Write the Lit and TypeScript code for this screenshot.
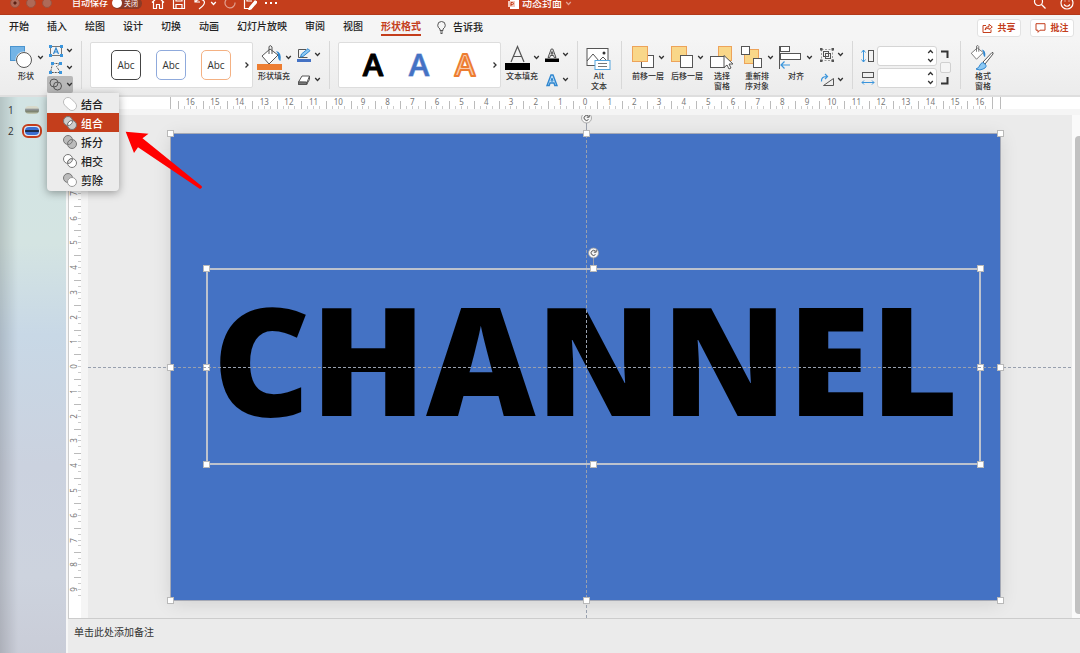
import { LitElement, html, css, svg, TemplateResult } from "lit";
import { customElement, state } from "lit/decorators.js";
import { classMap } from "lit/directives/class-map.js";

const chevron = html`<svg class="chev" width="7" height="5" viewBox="0 0 7 5" aria-hidden="true"><path d="M1.2 1l2.3 2.5L5.8 1" fill="none" stroke="currentColor" stroke-width="1.3"/></svg>`;

const icon = (w: number, h: number, body: TemplateResult | unknown) =>
  html`<svg width=${w} height=${h} viewBox="0 0 ${w} ${h}" fill="none" stroke="#555" stroke-width="1" aria-hidden="true">${body}</svg>`;

const bucket = svg`<path d="M3 11L11 4l8 6-9 9z" fill="#fff"/><path d="M10 9V1.500q2-2 3 .5V9"/><path d="M17 6q6 1 4.500 10q-3-1-2.500-7z" fill="#2f86cf" stroke="none"/>`;

const icons = {
  shapes: icon(25, 26, svg`<rect x="1.500" y="1.500" width="14" height="14" fill="#74b4e6" stroke="#4a94cf"/><circle cx="15" cy="15" r="8.500" fill="#f5f5f5" stroke="none"/><circle cx="15" cy="15" r="7.500" fill="#fff"/>`),
  textbox: icon(14, 12, svg`<rect x="1.500" y="1.500" width="11" height="9" stroke="#777"/><path d="M4.500 9L7 3l2.500 6M5.500 7h3" stroke="#2f86cf" stroke-width="1.200"/><path d="M0 0h3v3H0zM11 0h3v3h-3zM0 9h3v3H0zM11 9h3v3h-3z" fill="#3a95dc" stroke="none"/>`),
  points: icon(14, 12, svg`<path d="M3.500 1.500L1.500 10.500M3.500 1.500h8l-4 3 4 6h-10" stroke-dasharray="2 1"/><path d="M2 0h3v3H2zM10 0h3v3h-3zM0 9h3v3H0zM10 9h3v3h-3z" fill="#3a95dc" stroke="none"/>`),
  merge: icon(14, 13, svg`<circle cx="5" cy="5" r="4"/><circle cx="8.500" cy="8" r="4"/>`),
  fill: icon(25, 26, svg`<g transform="translate(2 0)">${bucket}</g><path d="M0 19h25v6H0z" fill="#ed7d31" stroke="none"/>`),
  line: icon(14, 14, svg`<path d="M9 1.500H1.500v8h9" /><path d="M3.500 9l1-3L11 .7l2 2L6 8.500z" fill="#8cc8f3" stroke="#2f86cf"/><path d="M0 11h14v3H0z" fill="#4472c4" stroke="none"/>`),
  eraser: icon(14, 12, svg`<path d="M1.500 8L5 2h7.500L10 8.500z" fill="#fff"/><path d="M1.500 8v2.500H9.500l3-5V2M10 8.500v2" fill="none"/><path d="M1.500 8h8v2.500h-8z" fill="#777"/>`),
  textfill: icon(25, 26, svg`<path d="M6 17L12.500 1.500 19 17M8.300 11.500h8.400" stroke-width="1.200"/><path d="M0 18h25v7H0z" fill="#000" stroke="none"/>`),
  textline: icon(14, 14, svg`<path d="M3 9.500L6.200 1h1.600L11 9.500H9.200L8.500 7.500h-3L4.800 9.500z" fill="#ddd"/><path d="M6 6h2L7 3.500z"/><path d="M0 10.500h14V14H0z" fill="#000" stroke="none"/>`),
  texteffect: icon(14, 14, svg`<path d="M2 12.500L6 2h2l4 10.500H9.800L9 10H5l-.8 2.500z" fill="#bcdcf5" stroke="#2f86cf" stroke-width="1.400"/><path d="M6 8h2L7 5z" fill="#fff" stroke="#2f86cf"/>`),
  alt: icon(25, 26, svg`<rect x="1" y="3.500" width="21" height="17" fill="#fff"/><path d="M1 16l6-7 6 7 4-4 5 5"/><circle cx="18" cy="8" r="1.500" fill="#333" stroke="none"/><rect x="9" y="15.500" width="15" height="9" fill="#fff" stroke="#56a5dd"/><path d="M12 18.500h9M12 21.500h9" stroke="#777"/>`),
  forward: icon(24, 26, svg`<rect x="10.500" y="10.500" width="12" height="12" fill="#fff"/><rect x="1.500" y="1.500" width="15" height="15" fill="#f9d789" stroke="#eda35a"/>`),
  backward: icon(24, 26, svg`<rect x="1.500" y="1.500" width="15" height="15" fill="#f9d789" stroke="#eda35a"/><rect x="10.500" y="10.500" width="12" height="12" fill="#fff"/>`),
  pane: icon(25, 26, svg`<rect x="9.500" y="1.500" width="13" height="14" fill="#f9d789" stroke="#eda35a"/><rect x="1.500" y="11.500" width="14" height="11" fill="#fff"/><path d="M15 10.500v12l3-2.500 2 4 2-1-2-4h4z" fill="#fff"/>`),
  reorder: icon(24, 26, svg`<rect x="4.500" y="4.500" width="14" height="14" fill="#f9d789" stroke="#eda35a"/><rect x="1.500" y="1.500" width="8" height="8" fill="#fff"/><rect x="13.500" y="13.500" width="8" height="9" fill="#fff"/>`),
  align: icon(24, 26, svg`<path d="M.5 1v23"/><rect x="1.500" y="1.500" width="9" height="5" fill="#fff"/><rect x="1.500" y="8.500" width="20" height="6" fill="#fff"/><path d="M11 20H2m3.500-3.500L2 20l3.500 3.500" stroke="#3a95dc" stroke-width="1.200"/>`),
  group: icon(14, 14, svg`<rect x="1.500" y="1.500" width="11" height="11" stroke="#999" stroke-dasharray="2 1.500"/><rect x="3.500" y="3.500" width="5" height="5"/><rect x="5.500" y="5.500" width="5" height="5"/><path d="M0 0h2.500v2.500H0zM11.500 0H14v2.500h-2.500zM0 11.500h2.500V14H0zM11.500 11.500H14V14h-2.500z" fill="#555" stroke="none"/>`),
  rotate: icon(14, 14, svg`<path d="M3.500 12.500h10v-7z"/><path d="M1.500 8.500Q1 3.500 7 3.500M5 1l2.500 2.500L5 6" stroke="#3a95dc" stroke-width="1.200"/>`),
  height: icon(14, 14, svg`<path d="M2.500 1v12M.5 3.500l2-2.500 2 2.500M.5 10.500l2 2.500 2-2.500" stroke="#3a95dc"/><rect x="7.500" y="1.500" width="5" height="11"/>`),
  width: icon(14, 14, svg`<path d="M1 11.500h12M3 9.500l-2 2 2 2M11 9.500l2 2-2 2" stroke="#3a95dc"/><rect x="1.500" y="1.500" width="11" height="5"/>`),
  format: icon(25, 26, svg`<g transform="translate(-1 0) scale(.75)">${bucket}</g><path d="M13 17L22 7.500q1.500-.5 1 1.500l-8 10z" fill="#fff"/><path d="M6 24q3-1 4-4 2-4 5-1t-2 5q-3 2-7 0z" fill="#8cc8f3" stroke="#2f86cf"/>`),
};

const pair = (a: string, b: string, mid = "none") => svg`
  <circle cx="5" cy="5" r="4.500" fill=${a} stroke="#777"/>
  <circle cx="9" cy="9" r="4.500" fill=${b} stroke="#777"/>
  <path d="M4.600 9.500A4.500 4.500 0 0 1 9.500 4.600A4.500 4.500 0 0 1 4.600 9.500z" fill=${mid} stroke="#777"/>`;

const mergeItems = [
  { label: "结合", art: svg`<path d="M1.800 8.200a4.500 4.500 0 0 1 6.400-6.400l4 4a4.500 4.500 0 0 1-6.400 6.400z" fill="#fff" stroke="#bbb"/>` },
  { label: "组合", art: pair("#ccc", "#ccc", "#fff") },
  { label: "拆分", art: pair("#bbb", "#bbb", "#bbb") },
  { label: "相交", art: pair("#fff", "#fff", "#ddd") },
  { label: "剪除", art: svg`<circle cx="5" cy="5" r="4.500" fill="#bbb" stroke="#777"/><circle cx="9" cy="9" r="4.500" fill="#fff" stroke="#999"/>` },
];

const tabs = ["开始", "插入", "绘图", "设计", "切换", "动画", "幻灯片放映", "审阅", "视图", "形状格式"];

const centimetres = (n: number) => Array.from({ length: 2 * n + 1 }, (_, i) => Math.abs(i - n));

@customElement("slide-ruler")
class SlideRuler extends LitElement {
  static properties = { reach: { type: Number }, vertical: { type: Boolean, reflect: true } };
  declare reach: number;
  declare vertical: boolean;

  static styles = css`
    :host { display: block; box-sizing: border-box; background: #fff; color: #777; font: 8px/9px "Noto Sans", sans-serif; }
    .track { display: flex; justify-content: center; height: 100%; box-sizing: border-box; }
    :host(:not([vertical])) .track { padding: 0 7px; border: solid #bbb; border-width: 0 1px; }
    .cell {
      flex: 1; display: flex; justify-content: center; min-width: 0;
      background:
        linear-gradient(#bbb, #bbb) 0 100% / 1px 8px no-repeat,
        linear-gradient(#ccc, #ccc) 25% 100% / 1px 3px no-repeat,
        linear-gradient(#ccc, #ccc) 50% 100% / 1px 3px no-repeat,
        linear-gradient(#ccc, #ccc) 75% 100% / 1px 3px no-repeat;
    }
    .cell:last-child { border-right: 1px solid #bbb; }
    :host([vertical]) .track { flex-direction: column; }
    :host([vertical]) .cell {
      flex: 0 0 5.3%; align-items: center; justify-content: flex-start;
      background:
        linear-gradient(#bbb, #bbb) 100% 0 / 7px 1px no-repeat,
        linear-gradient(#ccc, #ccc) 100% 25% / 3px 1px no-repeat,
        linear-gradient(#ccc, #ccc) 100% 50% / 3px 1px no-repeat,
        linear-gradient(#ccc, #ccc) 100% 75% / 3px 1px no-repeat;
    }
    :host([vertical]) .cell:last-child { border-right: 0; }
    :host([vertical]) .mark { width: 9px; text-align: center; transform: rotate(-90deg); }
  `;

  render() {
    return html`<div class="track">${centimetres(this.reach).map(n => html`<div class="cell"><span class="mark">${n}</span></div>`)}</div>`;
  }
}

@customElement("app-root")
class AppRoot extends LitElement {
  @state() private chosen = "组合";

  static styles = css`
    :host { display: flex; flex-direction: column; min-height: 100vh; position: relative; overflow: hidden; background: #ebebeb; color: #333; font: 10px/16px "Noto Sans CJK SC", sans-serif; }
    * { box-sizing: border-box; }
    svg { display: block; flex: none; }
    button { font: inherit; color: inherit; background: none; border: 0; padding: 0; margin: 0; }
    a { color: inherit; text-decoration: none; }

    .titlebar { display: grid; grid-template-columns: 1fr auto 1fr; grid-template-rows: 14px; align-items: end; height: 15px; overflow: hidden; background: #c43e1c; border-bottom: 1px solid #b3391a; color: #fff; }
    .bar { display: flex; align-items: center; height: 22px; }
    .lights { display: flex; gap: 6px; padding: 0 20px 0 10px; }
    .light { width: 10px; height: 10px; border-radius: 50%; background: #ae6a58; border: 1px solid #9c5340; }
    .light.dot { background: radial-gradient(#5c2012 20%, #ae6a58 35%); }
    .autosave { font-size: 9px; font-weight: 500; padding-right: 4px; }
    .toggle { display: flex; align-items: center; gap: 2px; width: 30px; height: 11px; border-radius: 6px; background: #8c3a26; font-size: 7px; line-height: 11px; margin-right: 9px; }
    .knob { width: 10px; height: 10px; border-radius: 50%; background: #fff; }
    .quick { display: flex; align-items: center; gap: 7px; }
    .quick .chev { margin-left: -4px; }
    .document { gap: 3px; font-weight: 500; }
    .faded { opacity: .5; }
    .right { justify-content: flex-end; gap: 14px; padding-right: 6px; }

    .tabs { display: flex; align-items: center; height: 24px; padding: 0 6px 0 9px; background: #f5f5f5; }
    .tablist { display: flex; gap: 18px; flex: none; }
    .tab { font-weight: 500; line-height: 16px; color: #222; white-space: nowrap; border-bottom: 2px solid transparent; }
    .tab.on { color: #c43e1c; font-weight: 700; border-color: #c43e1c; }
    .tell { display: flex; align-items: center; gap: 7px; margin-left: 16px; font-weight: 500; color: #222; flex: 1; }
    .actions { display: flex; gap: 9px; padding-top: 1px; }
    .action { display: flex; align-items: center; justify-content: center; gap: 4px; width: 44px; height: 18px; background: #fff; border: 1px solid #e2e2e2; border-radius: 3px; color: #c43e1c; font-size: 9px; font-weight: 700; white-space: nowrap; }

    .ribbon { display: flex; align-items: flex-start; height: 58px; padding: 2px 0 0 9px; background: linear-gradient(#f5f5f5, #ececec); border-bottom: 2px solid #dedede; color: #333; }
    .group { display: flex; gap: 4px; flex: none; }
    .group.airy { gap: 5px; }
    .rule { width: 1px; height: 48px; margin: 0 8px; background: #d8d8d8; flex: none; }
    .rule.roomy { margin: 0 9px; }
    .big { display: flex; flex-direction: column; width: 34px; padding-top: 3px; font-size: 8px; line-height: 10px; font-weight: 500; text-align: center; }
    .big.slim { width: 26px; }
    .face { display: flex; align-items: center; gap: 3px; height: 27px; }
    .caption { white-space: pre-line; }
    .wide .caption { white-space: nowrap; }
    .stack { display: flex; flex-direction: column; width: 26px; padding-top: 1px; position: relative; }
    .small { display: flex; align-items: center; gap: 3px; height: 25px; padding-left: 2px; }
    .dense .small { height: 17px; }
    .small.held { background: #b8b8b8; border-radius: 2px; }
    .gallery { display: flex; align-items: center; width: 163px; height: 46px; margin-top: 1px; padding: 0 2px 0 20px; background: #fff; border: 1px solid #ddd; border-radius: 2px; }
    .samples { display: flex; justify-content: space-between; flex: 1; padding-right: 13px; }
    .sample { width: 30px; height: 30px; border: 1px solid #444; border-radius: 5px; font: 10px/24px "Open Sans", sans-serif; }
    .sample.blue { border-color: #8faadc; }
    .sample.orange { border-color: #f4b183; }
    .letter svg { overflow: visible; }

    .size { display: grid; grid-template-columns: 14px 60px 12px; column-gap: 2px; row-gap: 2px; align-items: center; padding-top: 5px; }
    .field { display: flex; align-items: center; height: 20px; background: #fff; border: 1px solid #d5d5d5; border-radius: 3px; }
    .field input { width: 100%; min-width: 0; border: 0; background: none; font: inherit; padding: 0 3px; outline: none; }
    .spin { display: flex; flex-direction: column; gap: 4px; padding-right: 2px; color: #333; }
    .up { transform: rotate(180deg); }
    .lock { grid-column: 3; grid-row: 1 / span 2; display: flex; flex-direction: column; align-items: center; gap: 4px; }
    .lock input { appearance: none; width: 11px; height: 11px; margin: 0; border: 1px solid #d0d0d0; border-radius: 2px; background: #f5f5f5; }

    .menu { position: absolute; z-index: 3; top: 52px; left: 0; width: 72px; margin: 0; padding: 1px 0 2px; list-style: none; background: #ececec; border-radius: 0 0 4px 4px; box-shadow: 0 2px 8px rgba(0, 0, 0, .35); }
    .option { display: flex; align-items: center; gap: 4px; width: 100%; height: 19px; padding-left: 16px; font-size: 11px; font-weight: 500; color: #222; }
    .option.on { background: #c43e1c; color: #fff; }

    .body { display: grid; grid-template-columns: 66px 1fr; flex: 1; }
    .slides { display: flex; flex-direction: column; gap: 5px; padding: 5px 0 0 8px; background: linear-gradient(90deg, rgba(0, 0, 0, .14), transparent 18px), linear-gradient(#d2e4e4, #d4e4e2 26%, #c8d8e6 42%, #cbd2df 65%, #cdd3de 85%, #c9ccd7); }
    .slide-row { display: grid; grid-template-columns: 8px 20px; gap: 6px; align-items: center; color: #333; font-family: "Open Sans", sans-serif; }
    .thumb { width: 20px; height: 14px; padding: 1px; border-radius: 6px; border: 2px solid transparent; }
    .thumb.on { border-color: #c43e1c; background: #dbe7f5; }
    .mini { height: 100%; border-radius: 4px; background: linear-gradient(#d8dacb 25%, #8b9092 45%, #7d8470 70%, #cdd3bd); }
    .thumb.on .mini { background: linear-gradient(#3c6fd0 35%, #1b2c4c 36%, #1b2c4c 60%, #3c6fd0 61%); }

    .editor { display: flex; flex-direction: column; border-left: 2px solid #f7f7f7; min-width: 0; }
    .stage { display: grid; grid-template-columns: 19px 1fr 8px; grid-template-rows: 18px auto; border-left: 1px solid #ccc; }
    .across { grid-column: 1 / -1; height: 18px; padding: 0 79px 0 101px; border-bottom: 6px solid #f5f5f5; }
    .down { padding: 18px 0; border-right: 7px solid #f5f5f5; }
    .canvas { position: relative; padding: 19px 72px 18px 83px; overflow: hidden; }
    .scroll { background: #fafafa; padding: 21px 0 4px 3px; }
    .thumbbar { height: 100%; background: #c1c1c1; border-radius: 4px 0 0 4px; }

    .slide { position: relative; aspect-ratio: 16 / 9; background: #4472c4; box-shadow: 0 0 0 1px #a5a9b5, 0 3px 18px rgba(0, 0, 0, .12); }
    .guide { position: absolute; pointer-events: none; }
    .guide.h { left: -83px; right: -72px; top: 50%; height: 1px; background: repeating-linear-gradient(90deg, #98a0ae 0 3px, transparent 3px 5px); }
    .guide.v { top: -19px; bottom: -18px; left: 50%; width: 1px; background: repeating-linear-gradient(#98a0ae 0 3px, transparent 3px 5px); }
    .textbox { position: absolute; left: 4.300%; top: 29%; width: 93.300%; height: 41.800%; outline: 2px solid #bcc2ce; outline-offset: -1px; display: flex; align-items: center; justify-content: center; }
    .word { margin: 0; padding: 0 16px 18px 0; font: 900 151px/151px "Noto Sans", sans-serif; color: #000; white-space: nowrap; }
    .handle { position: absolute; width: 7px; height: 7px; margin: -4px; background: #fff; border: 1px solid #b9b9b9; }
    .n { top: 0; } .s { bottom: 0; } .w { left: 0; } .e { right: 0; }
    .cx { left: 50%; margin-left: -3px; } .cy { top: 50%; margin-top: -3px; }
    .spinner { position: absolute; left: 50%; top: -22px; margin-left: -5px; }

    .notes { flex: 1; border: 0; border-top: 1px solid #ccc; border-bottom: 1px solid #aaa; padding: 5px 6px; background: #ebebeb; font: inherit; color: #333; resize: none; min-height: 34px; overflow: hidden; outline: none; }
    .notes::placeholder { color: #333; opacity: 1; }
    .pointer { position: absolute; z-index: 4; left: 125px; top: 131px; pointer-events: none; }
  `;

  private big(name: keyof typeof icons, label: string, drop = true, slim = false) {
    return html`<button class=${classMap({ big: true, slim, wide: !label.includes("\n") })}>
      <span class="face">${icons[name]}${drop ? chevron : ""}</span><span class="caption">${label}</span>
    </button>`;
  }

  private small(name: keyof typeof icons, label: string, held = false) {
    return html`<button class=${classMap({ small: true, held })} aria-label=${label}>${icons[name]}${chevron}</button>`;
  }

  private more() {
    return html`<button aria-label="更多"><svg width="6" height="8" viewBox="0 0 6 8"><path d="M1.500 1.500L4 4 1.500 6.500" fill="none" stroke="#333" stroke-width="1.300"/></svg></button>`;
  }

  private handles() {
    return ["n w", "n cx", "n e", "cy w", "cy e", "s w", "s cx", "s e"].map(at => html`<i class="handle ${at}"></i>`);
  }

  private spinner() {
    return html`<svg class="spinner" width="11" height="18" viewBox="0 0 11 18" fill="none"><path d="M5.500 11v7" stroke="#9a9fab"/><circle cx="5.500" cy="6" r="5" fill="#f5f5f5" stroke="#999" stroke-width=".8"/><path d="M7.500 7.500A2.500 2.500 0 1 1 7.500 4.300M8.200 2.800v2.400H5.800" stroke="#555"/></svg>`;
  }

  private titlebar() {
    const line = (w: number, body: unknown) => html`<svg width=${w} height="14" viewBox="0 0 ${w} 14" fill="none" stroke="#fff" stroke-width="1.200">${body}</svg>`;
    return html`<header class="titlebar">
      <div class="bar">
        <div class="lights"><i class="light dot"></i><i class="light"></i><i class="light"></i></div>
        <span class="autosave">自动保存</span>
        <span class="toggle"><i class="knob"></i>关闭</span>
        <div class="quick">
          ${line(14, svg`<path d="M1 6.500L7 1l6 5.500M2.500 5.500v7H5.500v-4h3v4h3v-7"/>`)}
          ${line(14, svg`<path d="M1.500 1.500h9l2 2v9h-11zM4 1.500v3.500h6V1.500M4 12.500V8.500h6v4"/>`)}
          ${line(14, svg`<path d="M2 1v5h5M2 6q5-5 9-1 2 3-5 8"/>`)}
          ${chevron}
          <span class="faded">${line(12, svg`<path d="M8.500 2.500a5 5 0 1 0 2.500 4M8 0v3h3"/>`)}</span>
          ${line(14, svg`<path d="M12 4V1.500H1.500v11H6M4 1.500V5h5M13 5l-6 7-1 1.500"/><path d="M12 5l2 1-6 7-2 .5.500-2z" fill="#fff"/>`)}
          ${line(14, svg`<path d="M1 7h2m3 0h2m3 0h2" stroke-width="2"/>`)}
        </div>
      </div>
      <div class="bar document">
        <svg width="11" height="12" viewBox="0 0 11 12"><path d="M2 0h6l3 3v9H2z" fill="#fff"/><path d="M0 4h7v6H0z" fill="#f4c8bb"/><path d="M3 9V5.500h1.500a1 1 0 0 1 0 2H3" fill="none" stroke="#c43e1c"/></svg>
        动态封面 <span class="faded">${chevron}</span>
      </div>
      <div class="bar right">
        ${line(13, svg`<circle cx="5.500" cy="5.500" r="4"/><path d="M8.500 8.500l4 4"/>`)}
        ${line(14, svg`<circle cx="7" cy="7" r="6"/><path d="M4 8.500q3 3.500 6 0"/><path d="M4.500 5h1m3 0h1"/>`)}
      </div>
    </header>`;
  }

  private tabRow() {
    return html`<nav class="tabs">
      <div class="tablist">${tabs.map(t => html`<a href="#" class=${classMap({ tab: true, on: t === "形状格式" })}>${t}</a>`)}</div>
      <button class="tell"><svg width="9" height="13" viewBox="0 0 9 13" fill="none" stroke="#555"><path d="M3 9.500V8Q.7 6.500.7 4.300a3.800 3.800 0 0 1 7.600 0Q8.300 6.500 6 8v1.500zM3 11h3M3.500 12.500h2"/></svg>告诉我</button>
      <div class="actions">
        <button class="action"><svg width="11" height="10" viewBox="0 0 11 10" fill="none" stroke="currentColor"><path d="M4 2.500H1v7h8V6.500M3 7q0-3.500 4-3.500V1.200L10.300 4 7 6.500V5q-2.500 0-4 2z"/></svg>共享</button>
        <button class="action"><svg width="11" height="10" viewBox="0 0 11 10" fill="none" stroke="currentColor"><path d="M1 .7h9v6.500H5L3 9.300V7.200H1z"/></svg>批注</button>
      </div>
    </nav>`;
  }

  private sizeField(label: string) {
    return html`<span class="field"><input type="text" aria-label=${label}>
      <span class="spin"><button class="up" aria-label="增加${label}">${chevron}</button><button aria-label="减少${label}">${chevron}</button></span></span>`;
  }

  private ribbon() {
    const letter = (fill: string, stroke: string, w: number) => html`<button class="letter" aria-label="艺术字"><svg width="28" height="30" viewBox="0 0 28 30"><text x="14" y="26" text-anchor="middle" font-family="Open Sans, sans-serif" font-weight="600" font-size="31" fill=${fill} stroke=${stroke} stroke-width=${w} stroke-linejoin="round" paint-order=${w > 1 ? "normal" : "stroke"}>A</text></svg></button>`;
    return html`<section class="ribbon">
      <div class="group">
        ${this.big("shapes", "形状")}
        <div class="stack dense">
          ${this.small("textbox", "文本框")}${this.small("points", "编辑形状")}${this.small("merge", "合并形状", true)}
          <ul class="menu">${mergeItems.map(m => html`<li><button class=${classMap({ option: true, on: m.label === this.chosen })} @click=${() => (this.chosen = m.label)}>${icon(14, 14, m.art)}${m.label}</button></li>`)}</ul>
        </div>
      </div>
      <i class="rule"></i>
      <div class="group">
        <div class="gallery"><div class="samples"><button class="sample">Abc</button><button class="sample blue">Abc</button><button class="sample orange">Abc</button></div>${this.more()}</div>
        ${this.big("fill", "形状填充")}
        <div class="stack">${this.small("line", "形状轮廓")}${this.small("eraser", "形状效果")}</div>
      </div>
      <i class="rule"></i>
      <div class="group">
        <div class="gallery"><div class="samples">${letter("#000", "#000", 1)}${letter("#4472c4", "#8faadc", 1)}${letter("#f8cbad", "#ed7d31", 2)}</div>${this.more()}</div>
        ${this.big("textfill", "文本填充")}
        <div class="stack">${this.small("textline", "文本轮廓")}${this.small("texteffect", "文本效果")}</div>
      </div>
      <i class="rule"></i>
      <div class="group">${this.big("alt", "Alt\n文本", false, true)}</div>
      <i class="rule roomy"></i>
      <div class="group airy">
        ${this.big("forward", "前移一层")}${this.big("backward", "后移一层")}${this.big("pane", "选择\n窗格", false, true)}${this.big("reorder", "重新排\n序对象")}${this.big("align", "对齐")}
        <div class="stack">${this.small("group", "组合对象")}${this.small("rotate", "旋转")}</div>
      </div>
      <i class="rule"></i>
      <div class="size">
        ${icons.height}${this.sizeField("高度")}
        ${icons.width}${this.sizeField("宽度")}
        <div class="lock">
          <svg width="8" height="8" viewBox="0 0 8 8"><path d="M0 1.500h6.500V8" fill="none" stroke="#333" stroke-width="2"/></svg>
          <input type="checkbox" aria-label="锁定纵横比">
          <svg width="8" height="8" viewBox="0 0 8 8"><path d="M0 6.500h6.500V0" fill="none" stroke="#333" stroke-width="2"/></svg>
        </div>
      </div>
      <i class="rule roomy"></i>
      <div class="group">${this.big("format", "格式\n窗格", false, true)}</div>
    </section>`;
  }

  render() {
    return html`
      ${this.titlebar()}${this.tabRow()}${this.ribbon()}
      <main class="body">
        <aside class="slides">
          <div class="slide-row"><span>1</span><div class="thumb"><div class="mini"></div></div></div>
          <div class="slide-row"><span>2</span><div class="thumb on"><div class="mini"></div></div></div>
        </aside>
        <div class="editor">
          <div class="stage">
            <slide-ruler class="across" reach="16"></slide-ruler>
            <slide-ruler class="down" reach="9" vertical></slide-ruler>
            <div class="canvas">
              <div class="slide">
                <div class="textbox"><p class="word">CHANNEL</p>${this.handles()}${this.spinner()}</div>
                <i class="guide h"></i><i class="guide v"></i>
                ${this.handles()}${this.spinner()}
              </div>
            </div>
            <div class="scroll"><div class="thumbbar"></div></div>
          </div>
          <textarea class="notes" aria-label="备注" placeholder="单击此处添加备注"></textarea>
        </div>
      </main>
      <svg class="pointer" width="78" height="60" viewBox="0 0 78 60"><path d="M.7.700L23.500 2.700l-6 4.600L76.500 55q1.500 1.500-1.500 3L13 16.300 9 22z" fill="#f00"/></svg>
    `;
  }
}
